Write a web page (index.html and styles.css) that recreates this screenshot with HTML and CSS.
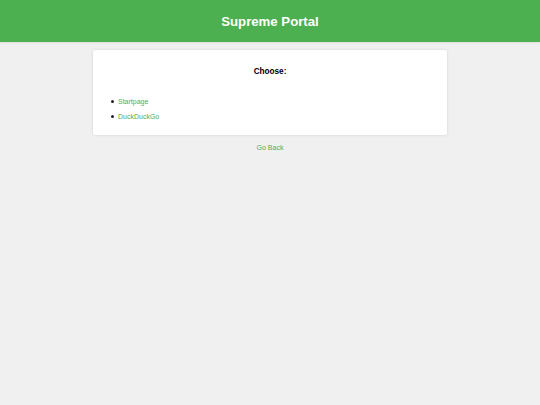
FILE: index.html
```html
<!DOCTYPE html>
<html lang="en">
<head>
<meta charset="utf-8">
<title>Supreme Portal</title>
<link rel="stylesheet" href="styles.css">
</head>
<body>
<header class="topbar">
  <h1 class="title">Supreme Portal</h1>
</header>
<main class="card">
  <h3 class="heading">Choose:</h3>
  <ul class="links">
    <li><a href="#">Startpage</a></li>
    <li><a href="#">DuckDuckGo</a></li>
  </ul>
</main>
<div class="back"><a href="#">Go Back</a></div>
</body>
</html>
```
FILE: styles.css
```css
html, body {
  margin: 0;
  padding: 0;
}
body {
  background: #f0f0f0;
  font-family: "Liberation Sans", Arial, sans-serif;
  font-size: 7px;
  color: #000;
}
a {
  color: #4caf50;
  text-decoration: none;
}
.topbar {
  background: #4caf50;
  height: 42px;
  display: flex;
  align-items: center;
  justify-content: center;
  box-shadow: 0 1px 2px rgba(0,0,0,0.08);
}
.title {
  margin: 0;
  color: #fff;
  font-size: 13.2px;
  font-weight: bold;
  line-height: 15px;
}
.card {
  box-sizing: border-box;
  width: 354px;
  margin: 8px auto 0;
  background: #fff;
  border-radius: 2px;
  box-shadow: 0 0 3px rgba(0,0,0,0.12);
  padding: 10px 10px 10px;
}
.heading {
  margin: 7px 0 0;
  text-align: center;
  font-size: 8.2px;
  line-height: 9px;
  font-weight: bold;
}
.links {
  margin: 22px 0 4px;
  padding-left: 8px;
  list-style: none;
}
.links li {
  display: flex;
  align-items: center;
  line-height: 8px;
  margin-bottom: 7.3px;
}
.links li::before {
  content: "";
  width: 3px;
  height: 3px;
  border-radius: 50%;
  background: #222;
  margin-right: 4px;
  margin-top: -1px;
  flex: none;
}
.links li:last-child {
  margin-bottom: 0;
}
.back {
  margin-top: 9px;
  text-align: center;
  line-height: 8px;
}
```
